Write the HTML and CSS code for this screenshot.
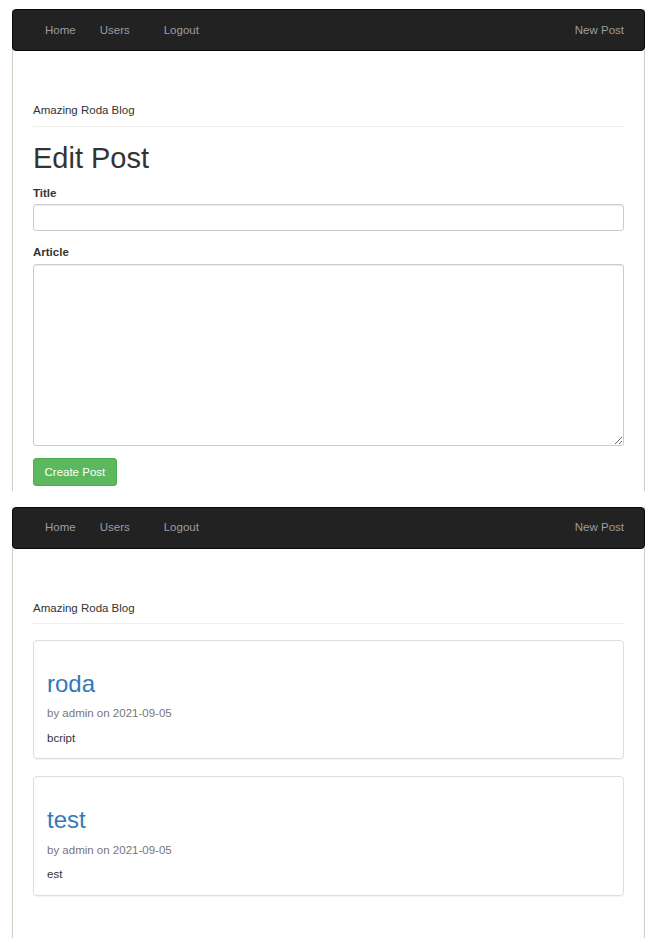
FILE: index.html
```html
<!DOCTYPE html>
<html lang="en">
<head>
  <meta charset="UTF-8" />
  <title>Amazing Roda Blog</title>
  <link rel="stylesheet" href="styles.css">
</head>
<body>

  <!-- Edit post screen -->
  <div class="shot shot-edit">
    <nav class="navbar">
      <ul class="nav">
        <li><a href="#">Home</a></li>
        <li><a href="#">Users</a></li>
        <li class="logout"><a href="#">Logout</a></li>
      </ul>
      <ul class="nav nav-right">
        <li><a href="#">New Post</a></li>
      </ul>
    </nav>
    <div class="container">
      <div class="page-header">Amazing Roda Blog</div>
      <h1>Edit Post</h1>
      <form>
        <div class="form-group">
          <label for="title">Title</label>
          <input type="text" id="title" name="title" class="form-control" />
        </div>
        <div class="form-group">
          <label for="article">Article</label>
          <textarea id="article" name="article" class="form-control area"></textarea>
        </div>
        <button type="submit" class="btn-success">Create Post</button>
      </form>
    </div>
  </div>

  <!-- Post list screen -->
  <div class="shot shot-list">
    <nav class="navbar">
      <ul class="nav">
        <li><a href="#">Home</a></li>
        <li><a href="#">Users</a></li>
        <li class="logout"><a href="#">Logout</a></li>
      </ul>
      <ul class="nav nav-right">
        <li><a href="#">New Post</a></li>
      </ul>
    </nav>
    <div class="container">
      <div class="page-header">Amazing Roda Blog</div>
      <div class="post">
        <h2><a href="#">roda</a></h2>
        <p class="meta">by admin on 2021-09-05</p>
        <p>bcript</p>
      </div>
      <div class="post">
        <h2><a href="#">test</a></h2>
        <p class="meta">by admin on 2021-09-05</p>
        <p>est</p>
      </div>
    </div>
  </div>

</body>
</html>
```

FILE: styles.css
```css
body {
  margin: 0;
  padding-top: 9px;
  background: #fff;
  font-family: "Liberation Sans", Arial, sans-serif;
  font-size: 11.5px;
  line-height: 16.5px;
  color: #333;
}
.shot {
  width: 631px;
  margin-left: 12px;
  border-left: 1px solid #cfcfc3;
  border-right: 1px solid #cfcfc3;
}
.shot-edit {
  padding-bottom: 5px;
  margin-bottom: 16px;
}
.shot-list {
  padding-bottom: 36px;
}
.navbar {
  display: flex;
  justify-content: space-between;
  align-items: center;
  height: 42px;
  margin: 0 -1px;
  background: #222;
  border: 1px solid #080808;
  border-radius: 4px;
  box-sizing: border-box;
}
.nav {
  display: flex;
  list-style: none;
  margin: 0;
  padding: 0 0 0 20px;
}
.nav-right {
  padding: 0 8px 0 0;
}
.nav a {
  display: block;
  padding: 0 12px;
  color: #9d9d9d;
  text-decoration: none;
  font-size: 11.5px;
}
.nav .logout {
  margin-left: 10px;
}
.container {
  padding: 0 20px;
}
.page-header {
  margin-top: 51px;
  padding-bottom: 7px;
  border-bottom: 1px solid #eee;
}
h1 {
  margin: 15px 0 11px;
  font-size: 29px;
  line-height: 32px;
  font-weight: 400;
  color: #333;
}
.form-group {
  margin-bottom: 13px;
}
label {
  display: block;
  margin-bottom: 3px;
  font-weight: 700;
}
.form-control {
  display: block;
  width: 100%;
  height: 27px;
  padding: 4px 10px;
  border: 1px solid #ccc;
  border-radius: 3px;
  box-sizing: border-box;
  font-family: inherit;
  font-size: 11.5px;
  box-shadow: inset 0 1px 1px rgba(0,0,0,0.075);
}
.area {
  height: 182px;
  margin-top: 1px;
}
.btn-success {
  height: 28px;
  margin-top: -1px;
  padding: 0 10.5px;
  background: #5cb85c;
  border: 1px solid #4cae4c;
  border-radius: 3px;
  color: #fff;
  font-family: inherit;
  font-size: 11.5px;
  cursor: pointer;
}
.post {
  margin: 16px 0 17px;
  padding: 12px 13px 4px;
  border: 1px solid #ddd;
  border-radius: 4px;
  box-shadow: 0 1px 1px rgba(0,0,0,0.05);
}
.post h2 {
  margin: 18px 0 8px;
  font-size: 24px;
  line-height: 26.4px;
  font-weight: 400;
}
.post h2 a {
  color: #337ab7;
  text-decoration: none;
}
.post p {
  margin: 0 0 8px;
}
.post .meta {
  color: #777;
}
```
